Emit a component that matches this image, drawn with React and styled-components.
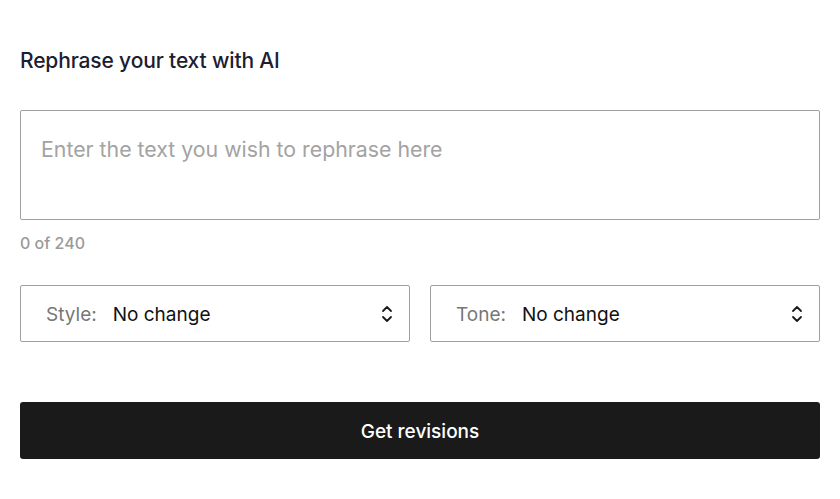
import React from "react";
import styled, { createGlobalStyle } from "styled-components";

const Global = createGlobalStyle`
  html, body { margin: 0; padding: 0; background: #fff; }
  body { font-family: "Inter", "Liberation Sans", sans-serif; }
  * { box-sizing: border-box; }
`;

const Page = styled.div`
  padding: 45px 20px 0 20px;
  display: flex;
  flex-direction: column;
`;

const Title = styled.h1`
  margin: 0;
  font-size: 21px;
  line-height: 32px;
  font-weight: 500;
  color: #1b2030;
  letter-spacing: -0.15px;
`;

const TextArea = styled.textarea`
  margin-top: 33px;
  width: 100%;
  height: 110px;
  border: 1px solid #a0a0a0;
  border-radius: 2px;
  padding: 24px 20px;
  font-family: inherit;
  font-size: 21.3px;
  line-height: 28px;
  resize: none;
  outline: none;
  color: #1a1a1a;
  &::placeholder { color: #a3a3a3; }
`;

const Counter = styled.div`
  margin-top: 12px;
  font-size: 16px;
  line-height: 22px;
  font-weight: 500;
  color: #9a9a9a;
`;

const SelectRow = styled.div`
  margin-top: 31px;
  display: grid;
  grid-template-columns: 1fr 1fr;
  gap: 20px;
`;

const SelectBox = styled.div`
  height: 57px;
  border: 1px solid #a0a0a0;
  border-radius: 2px;
  display: flex;
  align-items: center;
  padding: 2px 16px 0 25px;
  font-size: 19px;
`;

const Label = styled.span`
  color: #777;
  margin-right: 16px;
`;

const Value = styled.span`
  color: #111;
  flex: 1;
`;

const Button = styled.button`
  margin-top: 60px;
  height: 57px;
  width: 100%;
  border: none;
  border-radius: 3px;
  background: #1a1a1a;
  color: #fff;
  font-family: inherit;
  font-size: 19px;
  font-weight: 500;
  padding-top: 2px;
`;

const Chevrons = () => (
  <svg width="12" height="20" viewBox="0 0 12 20" fill="none" stroke="#1a1a1a" strokeWidth="1.8" strokeLinecap="round" strokeLinejoin="round" style={{ marginTop: -2 }}>
    <path d="M2 7 L6 3 L10 7" />
    <path d="M2 13 L6 17 L10 13" />
  </svg>
);

const Select = ({ label, value }) => (
  <SelectBox>
    <Label>{label}</Label>
    <Value>{value}</Value>
    <Chevrons />
  </SelectBox>
);

export default function App() {
  return (
    <>
      <Global />
      <Page>
        <Title>Rephrase your text with AI</Title>
        <TextArea placeholder="Enter the text you wish to rephrase here" />
        <Counter>0 of 240</Counter>
        <SelectRow>
          <Select label="Style:" value="No change" />
          <Select label="Tone:" value="No change" />
        </SelectRow>
        <Button>Get revisions</Button>
      </Page>
    </>
  );
}
